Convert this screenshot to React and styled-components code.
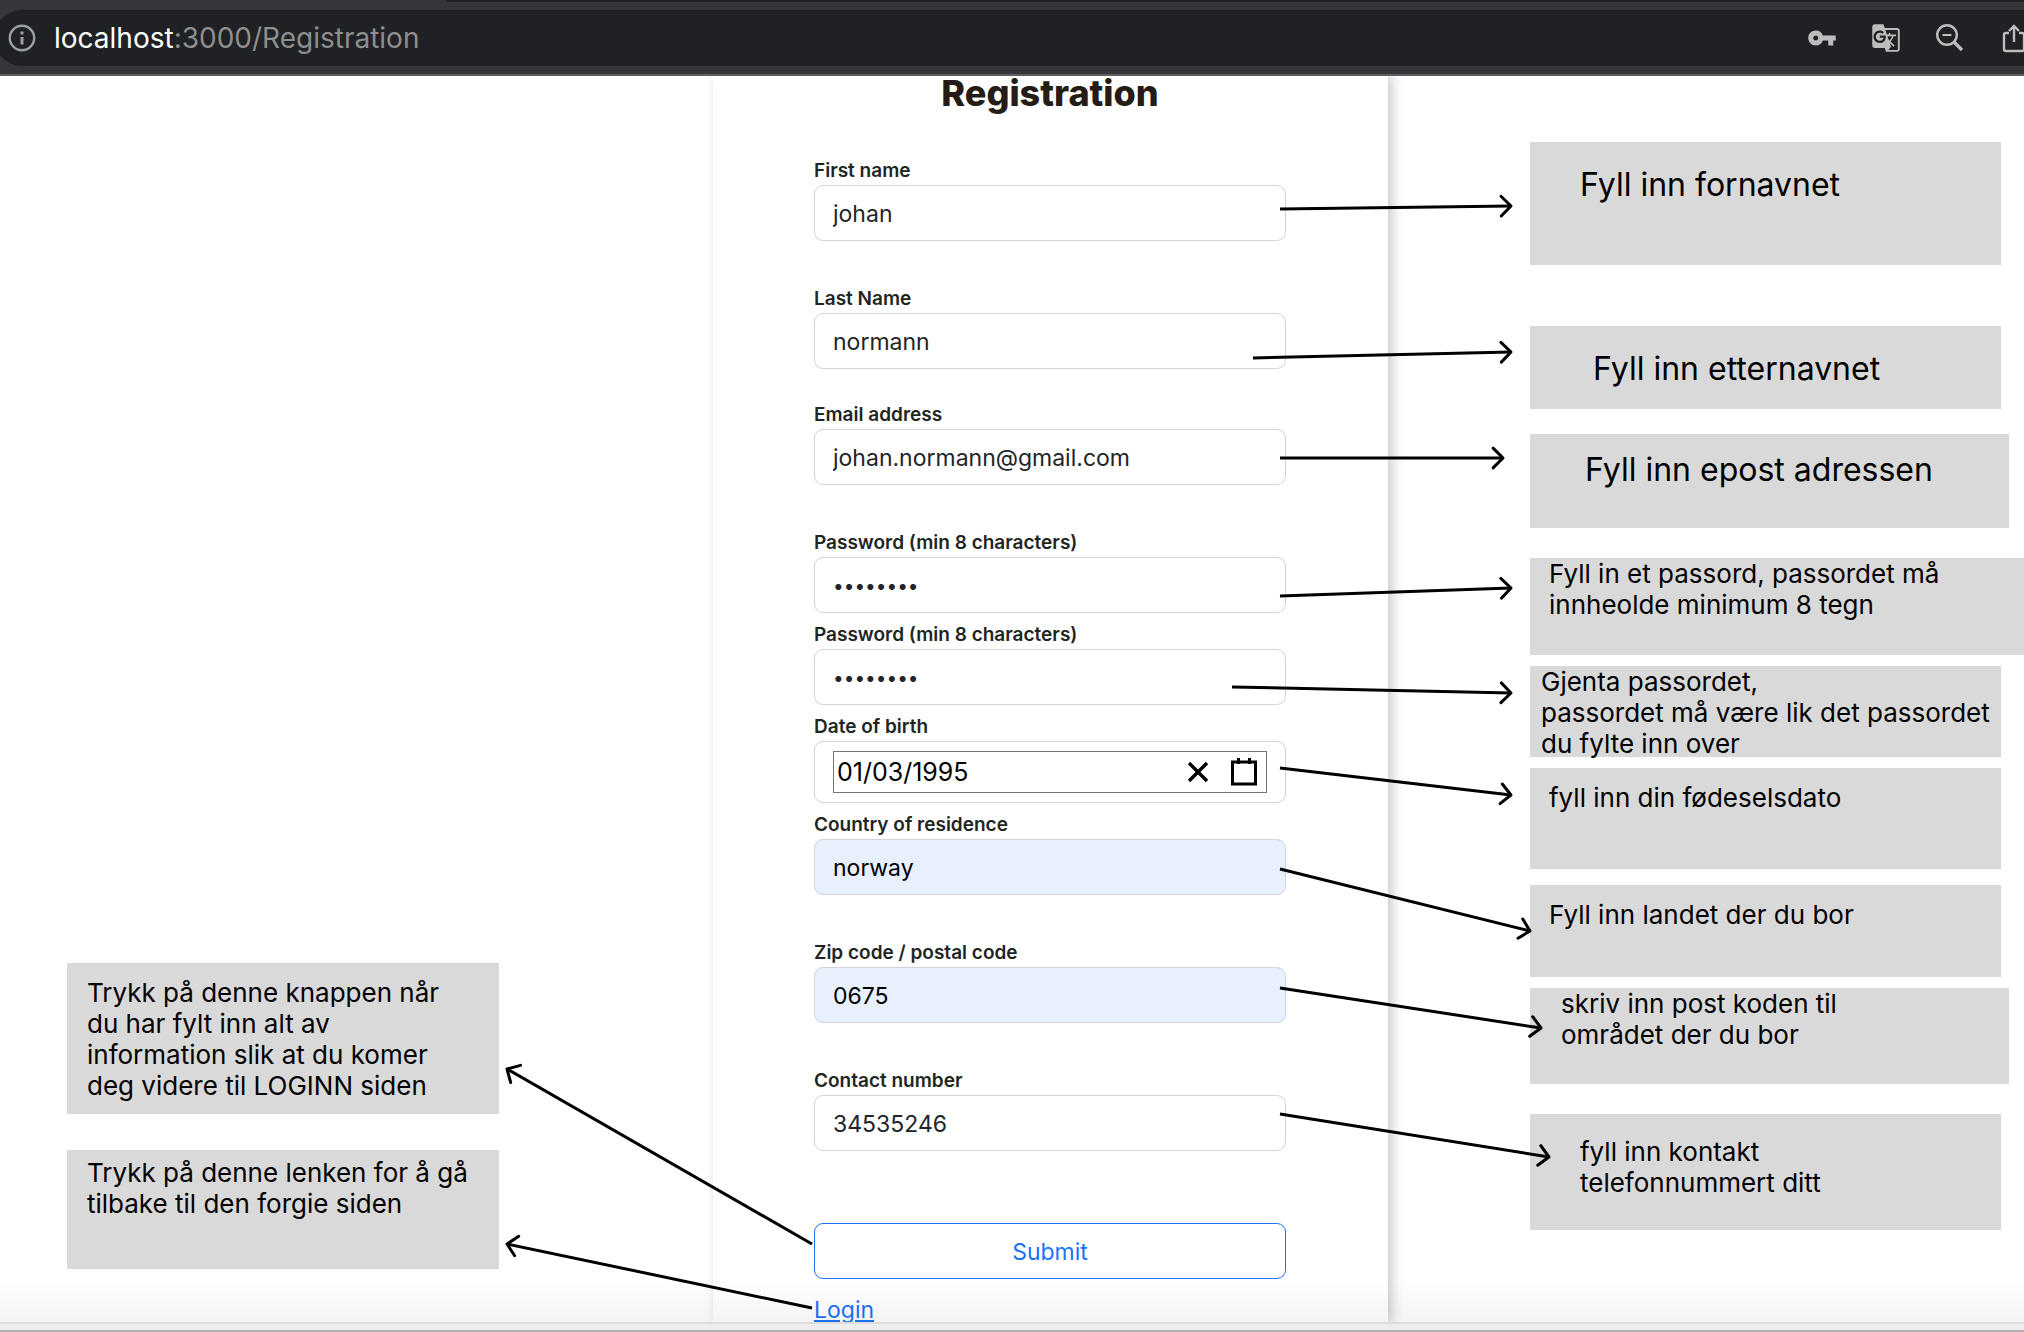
import React, { useState } from "react";
import styled, { createGlobalStyle } from "styled-components";
import { MdVpnKey, MdGTranslate } from "react-icons/md";

const GlobalStyle = createGlobalStyle`
  *, *::before, *::after { box-sizing: border-box; }
  body {
    margin: 0;
    background: #fff;
    color: #212529;
    font-family: Inter, "Liberation Sans", sans-serif;
  }
`;

const Page = styled.div`
  position: relative;
  min-height: 100vh;
  display: flex;
  flex-direction: column;
  overflow: hidden;
`;

/* Browser bar */

const BrowserBar = styled.header`
  position: relative;
  background: #35363a;
  border-bottom: 2px solid #5e5f63;
`;

const TabStrip = styled.div`
  height: 2px;
  margin-left: 446px;
  background: #202124;
  border-bottom-left-radius: 2px;
`;

const AddressBar = styled.div`
  display: flex;
  align-items: center;
  height: 56px;
  margin: 8px -6px;
  padding-left: 14px;
  border-radius: 28px 0 0 28px;
  background: #202124;
`;

const Address = styled.div`
  flex: 1;
  margin-left: 18px;
  font-size: 28px;
  line-height: 36px;
  color: #8e8e8f;
`;

const Host = styled.span`
  color: #fff;
`;

const Actions = styled.div`
  display: flex;
  gap: 32px;
`;

const IconButton = styled.button`
  display: flex;
  align-items: center;
  justify-content: center;
  width: ${(p) => p.$size || 32}px;
  height: ${(p) => p.$size || 32}px;
  padding: 0;
  border: 0;
  background: none;
  color: ${(p) => p.$color || "#bdbdbe"};
`;

/* Page columns */

const Columns = styled.main`
  flex: 1;
  display: grid;
  grid-template-columns: minmax(0, 713fr) minmax(0, 675fr) minmax(0, 636fr);
`;

const LeftNotes = styled.aside`
  display: flex;
  flex-direction: column;
  justify-content: flex-end;
  gap: 36px;
  padding: 0 214px 53px 67px;
`;

const RightNotes = styled.aside`
  display: flex;
  flex-direction: column;
  padding: 66px 23px 0 142px;
`;

const Note = styled.p`
  flex: none;
  height: ${(p) => p.$height}px;
  margin: 0 ${(p) => -(p.$bleed || 0)}px ${(p) => p.$gap || 0}px 0;
  padding: ${(p) => p.$top || 0}px 0 0 ${(p) => p.$left}px;
  background: #d9d9d9;
  color: #000;
  font-size: ${(p) => (p.$large ? 32 : 26)}px;
  line-height: ${(p) => (p.$large ? 39 : 31)}px;
  white-space: pre-line;
`;

const Card = styled.section`
  padding: 0 102px 0 101px;
  background: #fff;
  box-shadow: 4px 0 12px rgba(0, 0, 0, 0.22);
`;

const Title = styled.h1`
  margin: 0;
  font-size: 36px;
  line-height: 34px;
  font-weight: 800;
  text-align: center;
  color: #241c15;
`;

const Form = styled.form`
  display: flex;
  flex-direction: column;
  padding-top: 39px;
`;

const Field = styled.div`
  display: flex;
  flex-direction: column;
  margin-bottom: ${(p) => p.$gap || 0}px;
`;

const Label = styled.label`
  padding: 10px 0 2px;
  font-size: 19px;
  line-height: 24px;
  font-weight: 600;
  color: #1f261f;
`;

const Input = styled.input`
  width: 100%;
  height: 56px;
  padding: 2px 18px 0;
  border: 1px solid #ced4da;
  border-radius: 9px;
  background: ${(p) => (p.$filled ? "#e8f0fe" : "#fff")};
  color: ${(p) => (p.$filled ? "#000" : "#212529")};
  font-family: inherit;
  font-size: ${(p) => (p.type === "password" ? 19 : 23)}px;
`;

const DateFrame = styled.div`
  height: 62px;
  padding: 9px 18px;
  border: 1px solid #ced4da;
  border-radius: 9px;
`;

const DateBox = styled.div`
  display: flex;
  align-items: center;
  gap: 18px;
  height: 42px;
  padding: 0 8px 0 3px;
  border: 1px solid #767676;
`;

const DateInput = styled.input`
  flex: 1;
  min-width: 0;
  padding: 0;
  border: 0;
  background: none;
  color: #000;
  font-family: inherit;
  font-size: 25px;
`;

const Submit = styled.button`
  height: 56px;
  padding: 2px 18px 0;
  border: 1px solid #1a73f8;
  border-radius: 9px;
  background: #fff;
  color: #1a73f8;
  font-family: inherit;
  font-size: 23px;
`;

const LoginLink = styled.a`
  align-self: flex-start;
  margin-top: 19px;
  font-size: 23px;
  line-height: 24px;
  color: #1a73f8;
`;

const Fade = styled.div`
  height: 42px;
  margin-top: -42px;
  position: relative;
  background: linear-gradient(rgba(0, 0, 0, 0), rgba(0, 0, 0, 0.045));
  pointer-events: none;
`;

const WindowEdge = styled.footer`
  height: 10px;
  position: relative;
  background: #eee;
  border-top: 2px solid #dcdcdc;
  border-bottom: 2px solid #b0b0b0;
`;

const Arrows = styled.svg`
  position: absolute;
  top: 0;
  left: 0;
  width: 100%;
  height: 1332px;
  pointer-events: none;
  fill: none;
  stroke: #000;
  stroke-width: 3;
`;

const fields = [
  { id: "first", label: "First name", value: "johan", gap: 36 },
  { id: "last", label: "Last Name", value: "normann", gap: 24 },
  { id: "email", label: "Email address", value: "johan.normann@gmail.com", type: "email", gap: 36 },
  { id: "password", label: "Password (min 8 characters)", value: "norway95", type: "password" },
  { id: "repeat", label: "Password (min 8 characters)", value: "norway95", type: "password" },
  { id: "birth", label: "Date of birth", value: "01/03/1995", date: true },
  { id: "country", label: "Country of residence", value: "norway", filled: true, gap: 36 },
  { id: "zip", label: "Zip code / postal code", value: "0675", filled: true, gap: 36 },
  { id: "contact", label: "Contact number", value: "34535246", type: "tel", gap: 72 },
];

const rightNotes = [
  { text: "Fyll inn fornavnet", height: 123, gap: 61, top: 23, left: 50, large: true },
  { text: "Fyll inn etternavnet", height: 83, gap: 25, top: 23, left: 63, large: true },
  { text: "Fyll inn epost adressen", height: 94, gap: 30, top: 16, left: 55, large: true, bleed: 8 },
  { text: "Fyll in et passord, passordet må\ninnheolde minimum 8 tegn", height: 97, gap: 11, left: 19, bleed: 23 },
  { text: "Gjenta passordet,\npassordet må være lik det passordet\ndu fylte inn over", height: 91, gap: 11, left: 11 },
  { text: "fyll inn din fødeselsdato", height: 101, gap: 16, top: 14, left: 19 },
  { text: "Fyll inn landet der du bor", height: 92, gap: 11, top: 14, left: 19 },
  { text: "skriv inn post koden til\nområdet der du bor", height: 96, gap: 30, left: 31, bleed: 8 },
  { text: "fyll inn kontakt\ntelefonnummert ditt", height: 116, top: 22, left: 50 },
];

const leftNotes = [
  { text: "Trykk på denne knappen når\ndu har fylt inn alt av\ninformation slik at du komer\ndeg videre til LOGINN siden", height: 151, top: 14, left: 20 },
  { text: "Trykk på denne lenken for å gå\ntilbake til den forgie siden", height: 119, top: 7, left: 20 },
];

const arrows = [
  [1280, 209, 1511, 206],
  [1253, 358, 1511, 352],
  [1280, 458, 1503, 458],
  [1280, 596, 1511, 588],
  [1232, 687, 1511, 693],
  [1280, 768, 1511, 795],
  [1280, 869, 1530, 931],
  [1280, 988, 1541, 1028],
  [1280, 1114, 1549, 1157],
  [812, 1244, 507, 1069],
  [812, 1308, 507, 1244],
];

function Arrow({ points: [x1, y1, x2, y2] }) {
  const angle = Math.atan2(y2 - y1, x2 - x1);
  const barb = (turn) =>
    `${x2 - 14 * Math.cos(angle + turn)} ${y2 - 14 * Math.sin(angle + turn)}`;
  return (
    <g>
      <path d={`M${x1} ${y1}L${x2} ${y2}`} />
      <path
        d={`M${barb(Math.PI / 4)}L${x2} ${y2}L${barb(-Math.PI / 4)}`}
        strokeLinecap="round"
        strokeLinejoin="round"
      />
    </g>
  );
}

function NoteList({ notes }) {
  return notes.map((n) => (
    <Note
      key={n.text}
      $height={n.height}
      $gap={n.gap}
      $top={n.top}
      $left={n.left}
      $large={n.large}
      $bleed={n.bleed}
    >
      {n.text}
    </Note>
  ));
}

export default function App() {
  const [values, setValues] = useState(() =>
    Object.fromEntries(fields.map((f) => [f.id, f.value]))
  );
  const update = (id, value) => setValues((v) => ({ ...v, [id]: value }));

  return (
    <Page>
      <GlobalStyle />
      <BrowserBar>
        <TabStrip />
        <AddressBar>
          <svg width="28" height="28" viewBox="0 0 28 28" fill="none" stroke="#9aa0a6">
            <circle cx="14" cy="14" r="12.2" strokeWidth="2.4" />
            <path d="M14 13V20.5M14 7.5V10.5" strokeWidth="3" />
          </svg>
          <Address>
            <Host>localhost</Host>:3000/Registration
          </Address>
          <Actions>
            <IconButton aria-label="Passwords">
              <MdVpnKey size={30} />
            </IconButton>
            <IconButton aria-label="Translate">
              <MdGTranslate size={30} />
            </IconButton>
            <IconButton aria-label="Zoom out">
              <svg width="32" height="32" viewBox="0 0 32 32" fill="none" stroke="currentColor">
                <circle cx="13" cy="13" r="9.8" strokeWidth="2.4" />
                <path d="M8.5 13H17.5" strokeWidth="2" />
                <path d="M20 20L28 28" strokeWidth="3.4" />
              </svg>
            </IconButton>
            <IconButton aria-label="Share">
              <svg width="32" height="32" viewBox="0 0 32 32" fill="none" stroke="currentColor" strokeWidth="2.4">
                <path d="M11 11H8Q6 11 6 13V27Q6 29 8 29H24Q26 29 26 27V13Q26 11 24 11H21" />
                <path d="M16 20V4.500M11 9L16 4L21 9" />
              </svg>
            </IconButton>
          </Actions>
        </AddressBar>
      </BrowserBar>

      <Columns>
        <LeftNotes>
          <NoteList notes={leftNotes} />
        </LeftNotes>
        <Card>
          <Title>Registration</Title>
          <Form onSubmit={(e) => e.preventDefault()}>
            {fields.map((f) => (
              <Field key={f.id} $gap={f.gap}>
                <Label htmlFor={f.id}>{f.label}</Label>
                {f.date ? (
                  <DateFrame>
                    <DateBox>
                      <DateInput
                        id={f.id}
                        value={values[f.id]}
                        onChange={(e) => update(f.id, e.target.value)}
                      />
                      <IconButton type="button" aria-label="Clear date" $color="#000" $size={28} onClick={() => update(f.id, "")}>
                        <svg width="28" height="28" viewBox="0 0 28 28" fill="none" stroke="currentColor" strokeWidth="3.4">
                          <path d="M5 5L23 23M23 5L5 23" />
                        </svg>
                      </IconButton>
                      <IconButton type="button" aria-label="Open calendar" $color="#000" $size={28}>
                        <svg width="28" height="28" viewBox="0 0 28 28" fill="none" stroke="currentColor" strokeWidth="3">
                          <path d="M2.500 4H25.500V26H2.500Z" />
                          <path d="M8.500 0V6M19.500 0V6" />
                        </svg>
                      </IconButton>
                    </DateBox>
                  </DateFrame>
                ) : (
                  <Input
                    id={f.id}
                    type={f.type || "text"}
                    value={values[f.id]}
                    $filled={f.filled}
                    onChange={(e) => update(f.id, e.target.value)}
                  />
                )}
              </Field>
            ))}
            <Submit type="submit">Submit</Submit>
            <LoginLink href="/Login">Login</LoginLink>
          </Form>
        </Card>
        <RightNotes>
          <NoteList notes={rightNotes} />
        </RightNotes>
      </Columns>
      <Fade />
      <WindowEdge />

      <Arrows viewBox="0 0 2024 1332" preserveAspectRatio="none" aria-hidden="true">
        {arrows.map((points) => (
          <Arrow key={points.join()} points={points} />
        ))}
      </Arrows>
    </Page>
  );
}
